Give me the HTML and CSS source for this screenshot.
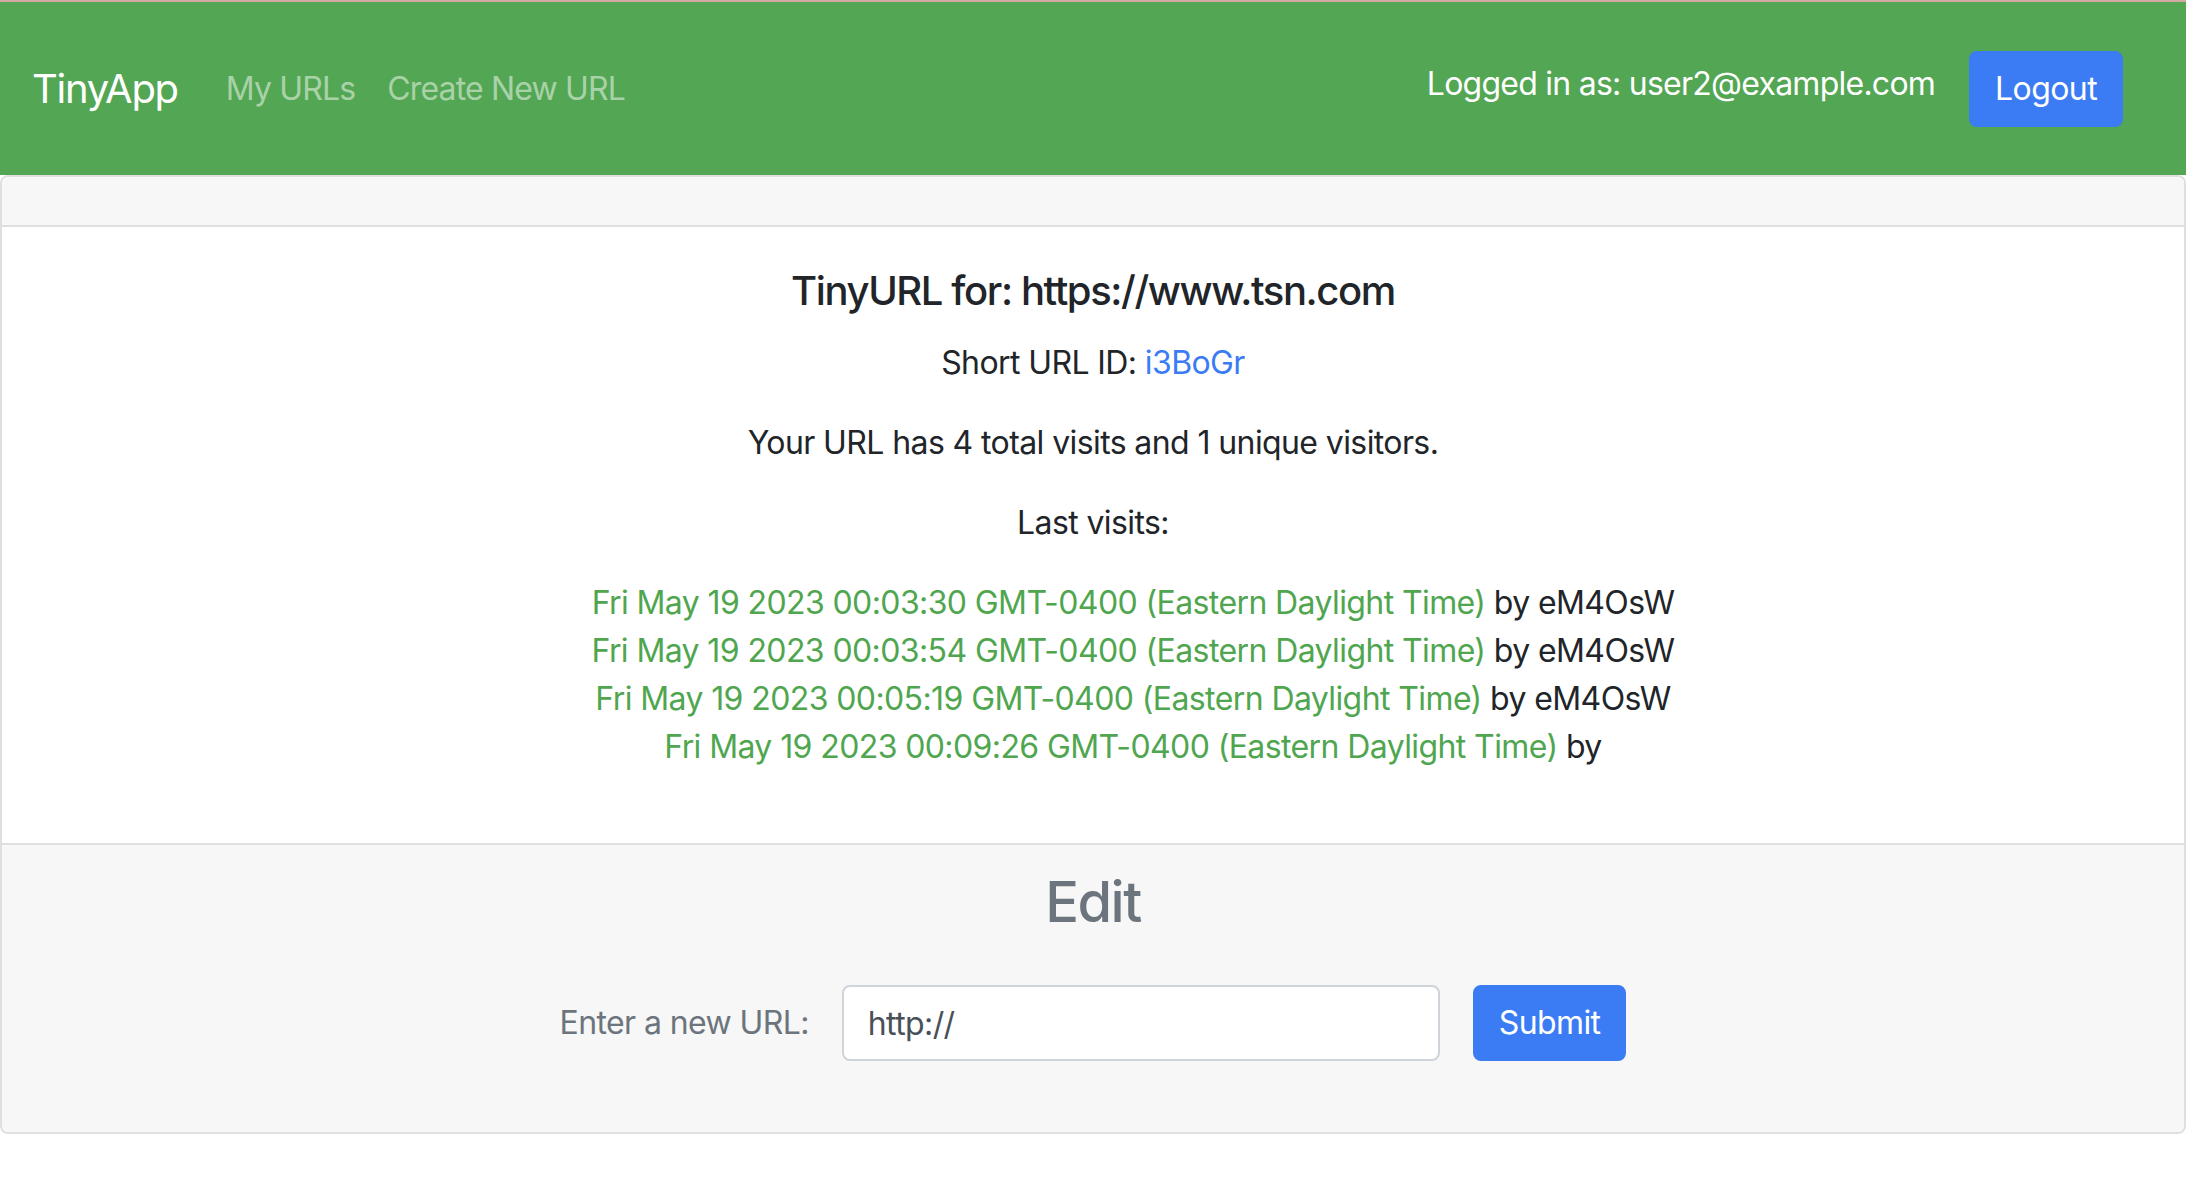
FILE: index.html
```html
<!DOCTYPE html>
<html lang="en">
<head>
<meta charset="utf-8">
<title>TinyApp</title>
<link rel="stylesheet" href="styles.css">
</head>
<body>
<nav class="navbar">
  <a class="brand" href="#">TinyApp</a>
  <div class="nav-links">
    <a class="nav-link" href="#">My URLs</a>
    <a class="nav-link" href="#">Create New URL</a>
  </div>
  <div class="nav-right">
    <span class="nav-text">Logged in as: user2@example.com</span>
    <button class="btn" type="button">Logout</button>
  </div>
</nav>
<main class="card">
  <div class="card-header"></div>
  <div class="card-body">
    <h5 class="card-title">TinyURL for: https://www.tsn.com</h5>
    <p class="card-text">Short URL ID: <a class="link" href="#">i3BoGr</a></p>
    <p class="card-text">Your URL has 4 total visits and 1 unique visitors.</p>
    <p class="card-text">Last visits:</p>
    <ul class="visits">
      <li class="visit"><span class="when">Fri May 19 2023 00:03:30 GMT-0400 (Eastern Daylight Time)</span> by eM4OsW</li>
      <li class="visit"><span class="when">Fri May 19 2023 00:03:54 GMT-0400 (Eastern Daylight Time)</span> by eM4OsW</li>
      <li class="visit"><span class="when">Fri May 19 2023 00:05:19 GMT-0400 (Eastern Daylight Time)</span> by eM4OsW</li>
      <li class="visit"><span class="when">Fri May 19 2023 00:09:26 GMT-0400 (Eastern Daylight Time)</span> by </li>
    </ul>
  </div>
  <div class="card-footer">
    <h3 class="edit-title">Edit</h3>
    <form class="edit-form">
      <label class="edit-label" for="newURL">Enter a new URL:</label>
      <input class="edit-input" id="newURL" type="text" placeholder="http://">
      <button class="btn" type="submit">Submit</button>
    </form>
  </div>
</main>
</body>
</html>
```
FILE: styles.css
```css
* { box-sizing: border-box; }

body {
  margin: 0;
  font-family: Inter, "Liberation Sans", Arial, sans-serif;
  font-size: 32px;
  line-height: 1.5;
  letter-spacing: -0.6px;
  color: #212529;
  background: #ffffff;
}

a { text-decoration: none; }

.navbar {
  display: flex;
  align-items: center;
  height: 175px;
  padding: 0 63px 0 32px;
  border-top: 2px solid #d2a8a0;
  background: #53a653;
}

.brand {
  color: #ffffff;
  font-size: 40px;
  line-height: 60px;
  letter-spacing: -1.3px;
  margin-right: 32px;
}

.nav-links {
  display: flex;
  flex: 1;
}

.nav-link {
  color: rgba(255, 255, 255, 0.5);
  padding: 0 16px;
  line-height: 48px;
  letter-spacing: -0.85px;
}

.nav-right {
  display: flex;
  align-items: center;
  gap: 34px;
}

.nav-text {
  color: #ffffff;
  margin-bottom: 10px;
  letter-spacing: -0.75px;
}

.btn {
  font-family: inherit;
  font-size: 32px;
  line-height: 48px;
  letter-spacing: -0.6px;
  color: #ffffff;
  background: #3b7cf4;
  border: 2px solid #3b7cf4;
  border-radius: 8px;
  padding: 12px 24px;
  cursor: pointer;
}

.card {
  display: block;
  border: 2px solid #dfdfdf;
  border-radius: 8px;
  overflow: hidden;
}

.card-header {
  height: 50px;
  background: #f7f7f7;
  border-bottom: 2px solid #dfdfdf;
}

.card-body {
  padding: 40px;
  text-align: center;
}

.card-title {
  margin: 0 0 24px;
  font-size: 40px;
  font-weight: 500;
  line-height: 48px;
  letter-spacing: -1.4px;
}

.card-text {
  margin: 0 0 32px;
}

.link { color: #3b7cf4; }

.visits {
  list-style: none;
  margin: 0 0 32px;
  padding: 0 0 0 80px;
}

.when { color: #4fa64f; }

.card-footer {
  background: #f7f7f7;
  border-top: 2px solid #dfdfdf;
  padding: 24px 40px 24px;
  text-align: center;
}

.edit-title {
  margin: 0 0 49px;
  font-size: 56px;
  font-weight: 500;
  line-height: 67px;
  letter-spacing: -1.5px;
  color: #6c757d;
}

.edit-form {
  display: flex;
  justify-content: center;
  align-items: center;
  gap: 33px;
  margin-bottom: 47px;
}

.edit-label {
  color: #6c757d;
}

.edit-input {
  width: 598px;
  height: 76px;
  font-family: inherit;
  font-size: 32px;
  letter-spacing: -0.6px;
  color: #495057;
  background: #ffffff;
  border: 2px solid #ced4da;
  border-radius: 8px;
  padding: 12px 24px;
}

.edit-input::placeholder { color: #495057; opacity: 1; }
```
